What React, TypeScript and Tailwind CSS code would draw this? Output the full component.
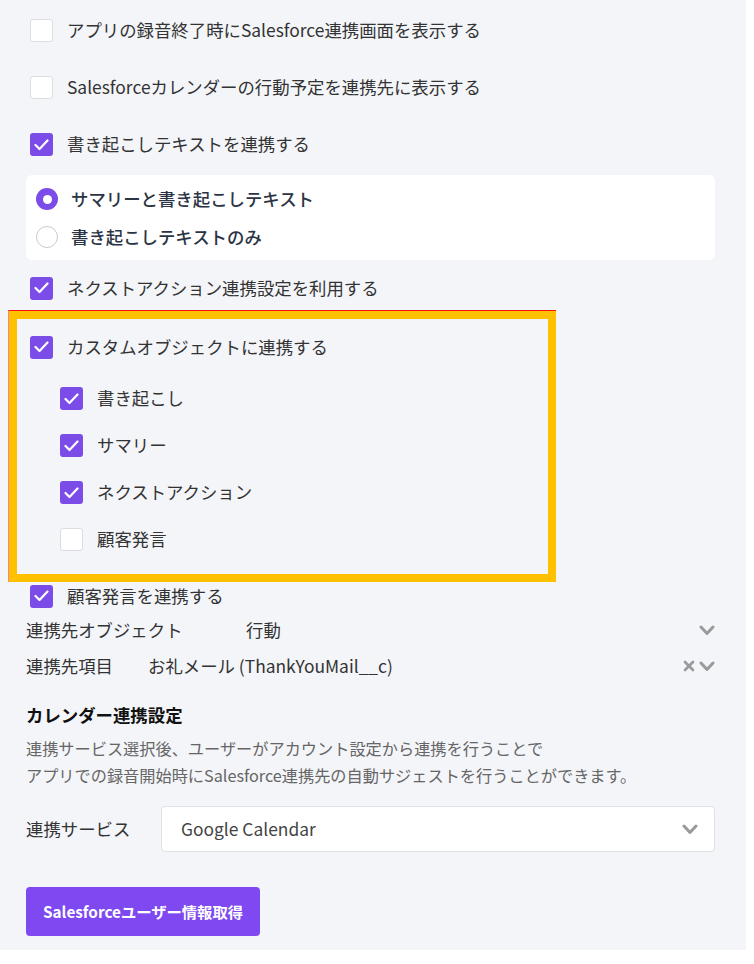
import React from "react";

const PURPLE = "bg-[#7c4ce8]";

function Box({ checked }: { checked: boolean }) {
  if (checked) {
    return (
      <span className={`flex h-[23px] w-[23px] shrink-0 items-center justify-center rounded-[3px] ${PURPLE}`}>
        <svg width="15" height="12" viewBox="0 0 15 12" fill="none">
          <polyline points="1.5,6 5.5,10 13.5,1.5" stroke="white" strokeWidth="2.2" strokeLinecap="round" strokeLinejoin="round" />
        </svg>
      </span>
    );
  }
  return <span className="block h-[23px] w-[23px] shrink-0 rounded-[3px] border border-[#dcdde3] bg-white" />;
}

function Chevron() {
  return (
    <svg width="16" height="11" viewBox="0 0 16 11" fill="none">
      <polyline points="2,2 8,8.5 14,2" stroke="#9a9a9a" strokeWidth="3" strokeLinecap="round" strokeLinejoin="round" />
    </svg>
  );
}

function Cross() {
  return (
    <svg width="12" height="12" viewBox="0 0 12 12" fill="none">
      <line x1="2" y1="2" x2="10" y2="10" stroke="#9a9a9a" strokeWidth="2.6" strokeLinecap="round" />
      <line x1="10" y1="2" x2="2" y2="10" stroke="#9a9a9a" strokeWidth="2.6" strokeLinecap="round" />
    </svg>
  );
}

function Row({ checked, label, h, pl = "pl-[30px]" }: { checked: boolean; label: string; h: string; pl?: string }) {
  return (
    <div className={`flex items-center ${h} ${pl}`}>
      <Box checked={checked} />
      <span className="ml-[14px] text-[17.4px] text-[#333333]">{label}</span>
    </div>
  );
}

function Radio({ selected, label }: { selected: boolean; label: string }) {
  return (
    <div className="flex h-[38px] items-center pl-[10px]">
      {selected ? (
        <span className="flex h-[22px] w-[22px] items-center justify-center rounded-full bg-[#7c4ce8]">
          <span className="h-[9px] w-[9px] rounded-full bg-white" />
        </span>
      ) : (
        <span className="block h-[22px] w-[22px] rounded-full border border-[#c9cbd2] bg-white" />
      )}
      <span className="ml-[13px] text-[17.4px] font-medium text-[#2b3445]">{label}</span>
    </div>
  );
}

export default function App() {
  return (
    <div className="min-h-[964px] bg-white" style={{ fontFamily: '"Noto Sans CJK JP", "Noto Sans", sans-serif' }}>
      <div className="flex w-[746px] flex-col bg-[#f4f5f9] pb-[14px] pt-[2px]">
        <Row checked={false} label="アプリの録音終了時にSalesforce連携画面を表示する" h="h-[57px]" />
        <Row checked={false} label="Salesforceカレンダーの行動予定を連携先に表示する" h="h-[57px]" />
        <Row checked={true} label="書き起こしテキストを連携する" h="h-[57px]" />

        <div className="ml-[26px] mt-[2px] w-[689px] rounded-[6px] bg-white pb-[4px] pt-[5px]">
          <Radio selected={true} label="サマリーと書き起こしテキスト" />
          <Radio selected={false} label="書き起こしテキストのみ" />
        </div>

        <div className="mt-[8px]">
          <Row checked={true} label="ネクストアクション連携設定を利用する" h="h-[40px]" />
        </div>

        <div className="ml-[8px] mt-[2px] w-[548px] border-l border-t border-l-[#f08a8a] border-t-[#ff1010]">
          <div className="border-[8px] border-[#ffc000] pb-[11px] pt-[8px]">
            <Row checked={true} label="カスタムオブジェクトに連携する" h="h-[40px]" pl="pl-[13px]" />
            <div className="mt-[8px]">
              <Row checked={true} label="書き起こし" h="h-[47px]" pl="pl-[43px]" />
              <Row checked={true} label="サマリー" h="h-[47px]" pl="pl-[43px]" />
              <Row checked={true} label="ネクストアクション" h="h-[47px]" pl="pl-[43px]" />
              <Row checked={false} label="顧客発言" h="h-[47px]" pl="pl-[43px]" />
            </div>
          </div>
        </div>

        <Row checked={true} label="顧客発言を連携する" h="h-[28px]" />

        <div className="mt-[2px] flex h-[36px] items-center pl-[26px] pr-[31px] text-[17.4px] text-[#333333]">
          <span className="w-[220px]">連携先オブジェクト</span>
          <span className="flex-1">行動</span>
          <Chevron />
        </div>
        <div className="flex h-[36px] items-center pl-[26px] pr-[31px] text-[17.4px] text-[#333333]">
          <span className="w-[122px]">連携先項目</span>
          <span className="flex-1">お礼メール (ThankYouMail__c)</span>
          <span className="mr-[4px]">
            <Cross />
          </span>
          <Chevron />
        </div>

        <div className="mt-[15px] flex h-[32px] items-center pl-[26px] text-[17.4px] font-bold text-[#111111]">
          カレンダー連携設定
        </div>
        <div className="mt-[4px] pl-[26px] text-[16.2px] leading-[27px] text-[#666666]">
          <div>連携サービス選択後、ユーザーがアカウント設定から連携を行うことで</div>
          <div>アプリでの録音開始時にSalesforce連携先の自動サジェストを行うことができます。</div>
        </div>

        <div className="mt-[17px] flex items-center pl-[26px]">
          <span className="w-[135px] text-[17.4px] text-[#333333]">連携サービス</span>
          <div className="flex h-[46px] w-[554px] items-center rounded-[4px] border border-[#dfe1e6] bg-white pl-[19px] pr-[16px]">
            <span className="flex-1 text-[17.4px] text-[#444444]">Google Calendar</span>
            <Chevron />
          </div>
        </div>

        <div className="mt-[35px] pl-[26px]">
          <button className="flex h-[49px] w-[234px] items-center justify-center rounded-[4px] bg-[#7e49f0] text-[15.3px] font-bold text-white">
            Salesforceユーザー情報取得
          </button>
        </div>
      </div>
    </div>
  );
}
